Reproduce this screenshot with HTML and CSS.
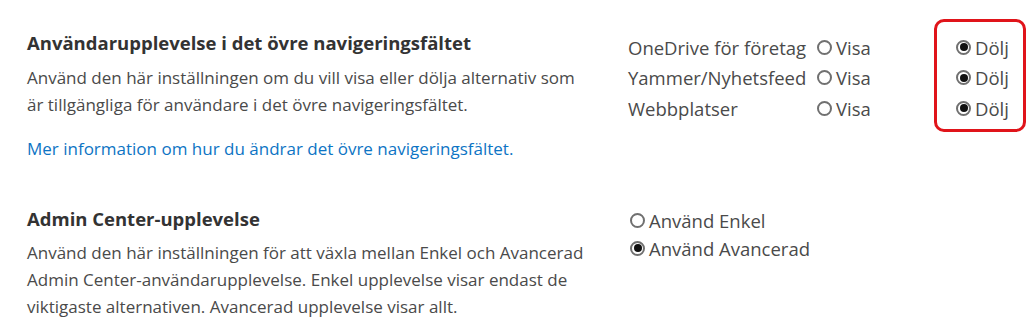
FILE: index.html
```html
<!DOCTYPE html>
<html lang="sv">
<head>
<meta charset="utf-8">
<title>Inställningar</title>
<link rel="stylesheet" href="styles.css">
</head>
<body>
<div class="page">
  <section class="setting first">
    <div class="info">
      <h2 class="title">Användarupplevelse i det övre navigeringsfältet</h2>
      <p class="desc">Använd den här inställningen om du vill visa eller dölja alternativ som är tillgängliga för användare i det övre navigeringsfältet.</p>
      <a class="link" href="#">Mer information om hur du ändrar det övre navigeringsfältet.</a>
    </div>
    <div class="options nav-options">
      <div class="col labels">
        <div class="row">OneDrive för företag</div>
        <div class="row">Yammer/Nyhetsfeed</div>
        <div class="row">Webbplatser</div>
      </div>
      <div class="col visa">
        <div class="row"><span class="radio"></span>Visa</div>
        <div class="row"><span class="radio"></span>Visa</div>
        <div class="row"><span class="radio"></span>Visa</div>
      </div>
      <div class="col dolj">
        <div class="row"><span class="radio checked"></span>Dölj</div>
        <div class="row"><span class="radio checked"></span>Dölj</div>
        <div class="row"><span class="radio checked"></span>Dölj</div>
      </div>
    </div>
  </section>
  <section class="setting second">
    <div class="info">
      <h2 class="title">Admin Center-upplevelse</h2>
      <p class="desc">Använd den här inställningen för att växla mellan Enkel och Avancerad Admin Center-användarupplevelse. Enkel upplevelse visar endast de viktigaste alternativen. Avancerad upplevelse visar allt.</p>
    </div>
    <div class="options mode-options">
      <div class="row2"><span class="radio"></span>Använd Enkel</div>
      <div class="row2"><span class="radio checked"></span>Använd Avancerad</div>
    </div>
  </section>
</div>
</body>
</html>
```
FILE: styles.css
```css
html, body {
  margin: 0;
  padding: 0;
  background: #ffffff;
}
body {
  font-family: "Open Sans", "Noto Sans", "DejaVu Sans", sans-serif;
  color: #444444;
  width: 1030px;
  height: 332px;
  overflow: hidden;
}
.page {
  padding-left: 27px;
}
.setting {
  display: flex;
  align-items: flex-start;
}
.first {
  padding-top: 31px;
}
.second {
  padding-top: 45px;
}
.info {
  width: 562px;
  margin-right: 39px;
  flex: none;
}
.title {
  margin: 0;
  font-size: 18.5px;
  line-height: 24px;
  font-weight: 700;
  color: #333333;
}
.desc {
  margin: 9px 0 0;
  font-size: 17px;
  line-height: 27px;
  color: #4a4a4a;
}
.second .desc {
  margin-top: 8px;
}
.link {
  display: block;
  margin-top: 17px;
  font-size: 17px;
  line-height: 27px;
  color: #0d74c4;
  text-decoration: none;
}
.options {
  font-size: 18.5px;
  color: #4a4a4a;
}
.nav-options {
  display: flex;
  align-items: flex-start;
  margin-top: 1px;
}
.col {
  display: flex;
  flex-direction: column;
}
.row {
  height: 30.5px;
  display: flex;
  align-items: center;
  white-space: nowrap;
}
.labels {
  width: 189px;
}
.visa {
  width: 117px;
}
.dolj {
  width: 92px;
  box-sizing: border-box;
  margin-top: -13px;
  padding: 10px 0 5px 19px;
  border: 3px solid #e0141a;
  border-radius: 10px;
}
.row2 {
  height: 27.5px;
  display: flex;
  align-items: center;
  padding-left: 2px;
  white-space: nowrap;
}
.radio {
  width: 11px;
  height: 11px;
  border: 2px solid #707070;
  border-radius: 50%;
  box-sizing: content-box;
  margin-right: 4px;
  position: relative;
  flex: none;
}
.radio.checked::after {
  content: "";
  position: absolute;
  left: 1.5px;
  top: 1.5px;
  width: 8px;
  height: 8px;
  border-radius: 50%;
  background: #111111;
}
```
